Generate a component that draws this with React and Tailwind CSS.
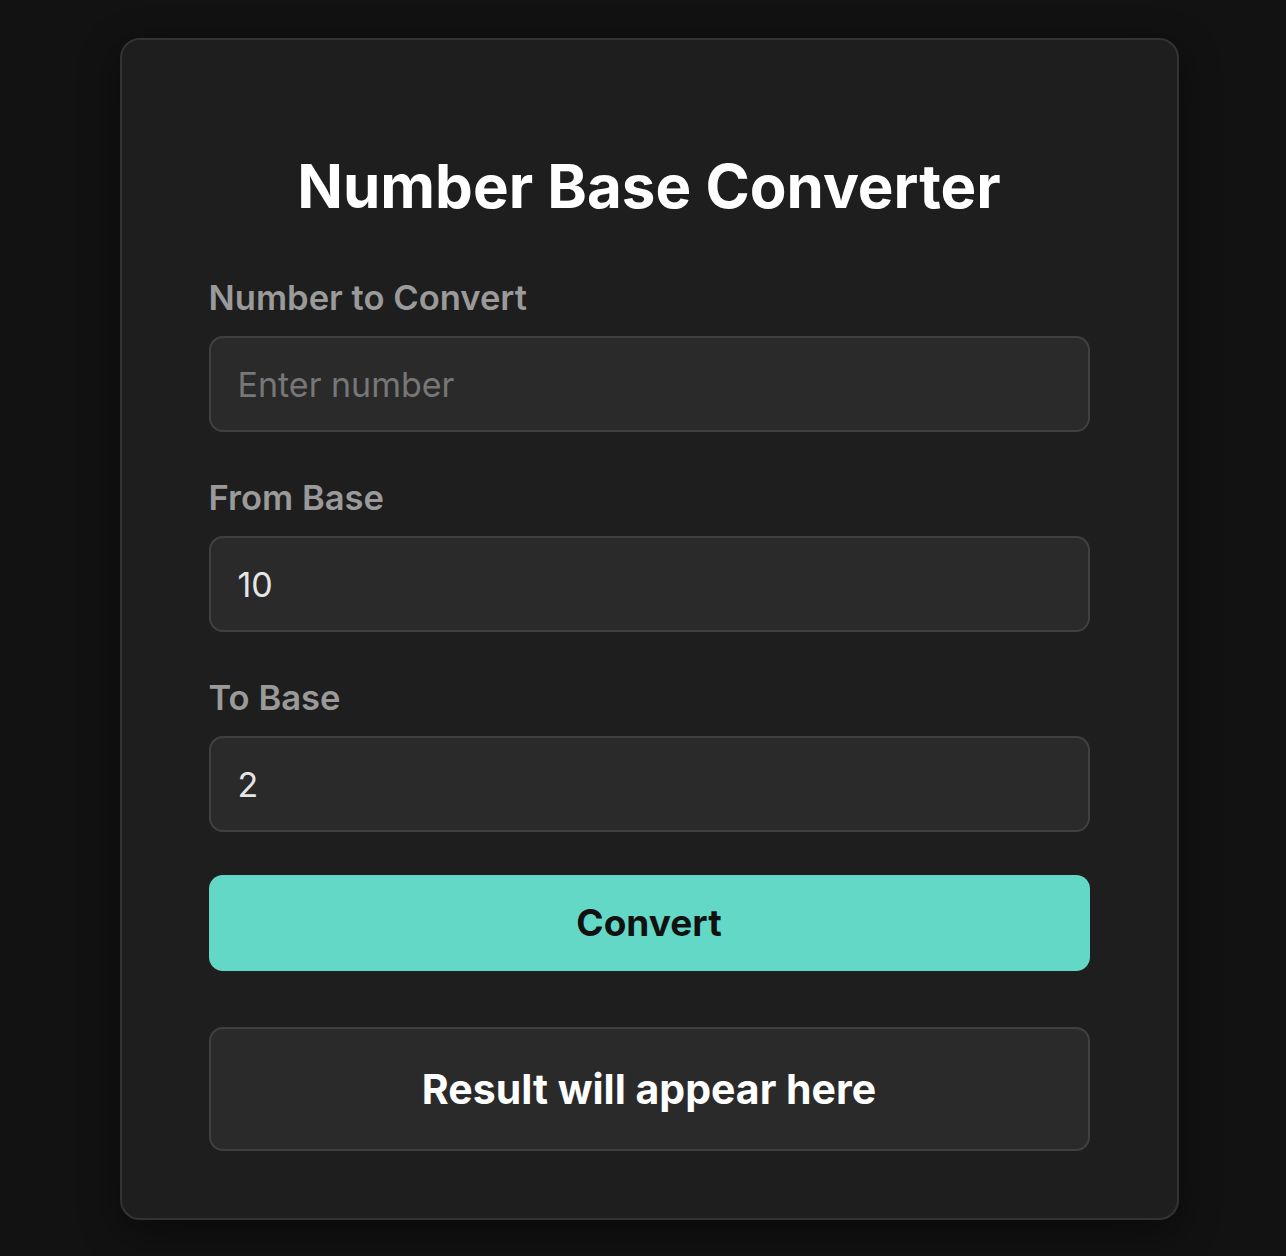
export default function App() {
  return (
    <div className="min-h-screen bg-[#121212] flex justify-center pl-3 pt-[38px] pb-[40px] font-['Inter','Liberation_Sans',sans-serif]">
      <div className="w-[1059px] rounded-[20px] border-2 border-[#333333] bg-[#1e1e1e] px-[87px] pt-[110px] pb-[67px] shadow-[0_12px_40px_rgba(0,0,0,0.45)]">
        <h1 className="text-center text-[60px] leading-[72px] font-bold text-white mb-[53px]">
          Number Base Converter
        </h1>

        <div className="flex flex-col gap-[43px]">
          <Field label="Number to Convert" placeholder="Enter number" />
          <Field label="From Base" value="10" />
          <Field label="To Base" value="2" />
        </div>

        <button className="mt-[43px] w-full h-[96px] rounded-[14px] bg-[#63d8c6] text-[#111111] text-[37px] font-bold">
          Convert
        </button>

        <div className="mt-[56px] h-[124px] rounded-[14px] border-2 border-[#404040] bg-[#2a2a2a] flex items-center justify-center">
          <span className="text-white text-[41px] leading-[48px] font-bold">Result will appear here</span>
        </div>
      </div>
    </div>
  )
}

function Field({ label, placeholder, value }) {
  return (
    <div>
      <label className="block text-[34.6px] leading-[44px] font-semibold text-[#9a9a9a] mb-[17px]">
        {label}
      </label>
      <input
        type="text"
        placeholder={placeholder}
        defaultValue={value}
        className="w-full h-[96px] rounded-[14px] border-2 border-[#404040] bg-[#2a2a2a] px-[27px] text-[34px] text-[#e6e6e6] placeholder:text-[#777777] outline-none"
      />
    </div>
  )
}
